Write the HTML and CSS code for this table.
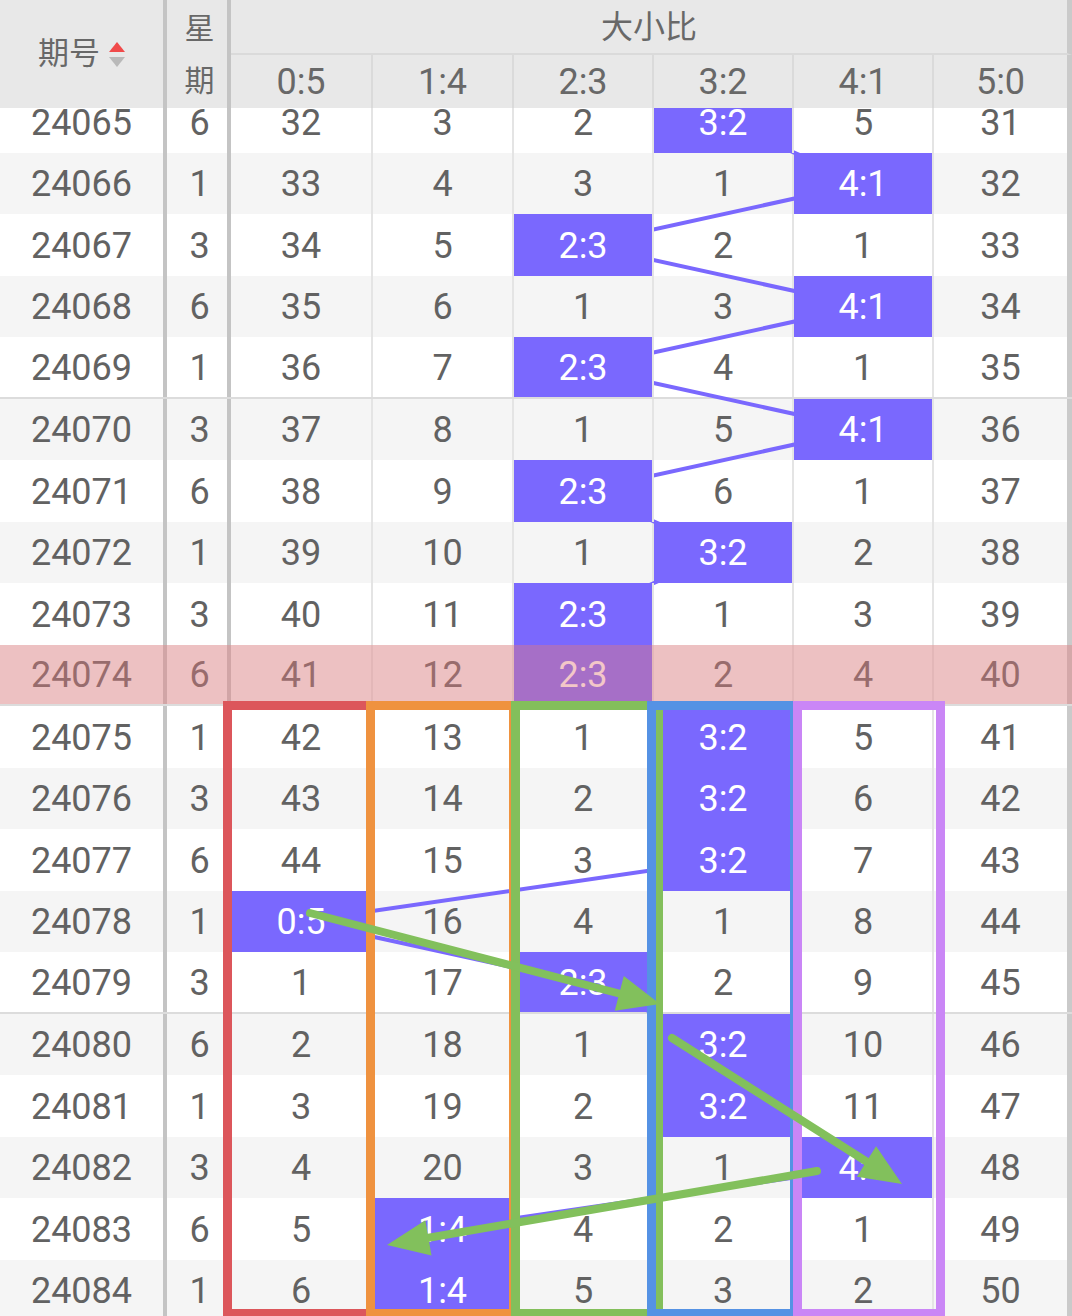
FILE: index.html
```html
<!DOCTYPE html>
<html lang="zh">
<head>
<meta charset="utf-8">
<title>大小比</title>
<link rel="stylesheet" href="styles.css">
</head>
<body>
<div class="table">
  <div class="thead">
    <div class="h h-qh"><span class="qh-text">期号</span><span class="sort"><i class="up"></i><i class="down"></i></span></div>
    <div class="h h-xq"><span>星</span><span>期</span></div>
    <div class="h h-big"><span class="big-text">大小比</span></div>
    <div class="h h-r">0:5</div>
    <div class="h h-r">1:4</div>
    <div class="h h-r">2:3</div>
    <div class="h h-r">3:2</div>
    <div class="h h-r">4:1</div>
    <div class="h h-r last">5:0</div>
  </div>
  <div class="tbody">
    <div class="row"><div class="c qh">24065</div><div class="c xq">6</div><div class="c">32</div><div class="c">3</div><div class="c">2</div><div class="c hit">3:2</div><div class="c">5</div><div class="c last">31</div></div>
    <div class="row even"><div class="c qh">24066</div><div class="c xq">1</div><div class="c">33</div><div class="c">4</div><div class="c">3</div><div class="c">1</div><div class="c hit">4:1</div><div class="c last">32</div></div>
    <div class="row"><div class="c qh">24067</div><div class="c xq">3</div><div class="c">34</div><div class="c">5</div><div class="c hit">2:3</div><div class="c">2</div><div class="c">1</div><div class="c last">33</div></div>
    <div class="row even"><div class="c qh">24068</div><div class="c xq">6</div><div class="c">35</div><div class="c">6</div><div class="c">1</div><div class="c">3</div><div class="c hit">4:1</div><div class="c last">34</div></div>
    <div class="row grp"><div class="c qh">24069</div><div class="c xq">1</div><div class="c">36</div><div class="c">7</div><div class="c hit">2:3</div><div class="c">4</div><div class="c">1</div><div class="c last">35</div></div>
    <div class="row even"><div class="c qh">24070</div><div class="c xq">3</div><div class="c">37</div><div class="c">8</div><div class="c">1</div><div class="c">5</div><div class="c hit">4:1</div><div class="c last">36</div></div>
    <div class="row"><div class="c qh">24071</div><div class="c xq">6</div><div class="c">38</div><div class="c">9</div><div class="c hit">2:3</div><div class="c">6</div><div class="c">1</div><div class="c last">37</div></div>
    <div class="row even"><div class="c qh">24072</div><div class="c xq">1</div><div class="c">39</div><div class="c">10</div><div class="c">1</div><div class="c hit">3:2</div><div class="c">2</div><div class="c last">38</div></div>
    <div class="row"><div class="c qh">24073</div><div class="c xq">3</div><div class="c">40</div><div class="c">11</div><div class="c hit">2:3</div><div class="c">1</div><div class="c">3</div><div class="c last">39</div></div>
    <div class="row even grp cur"><div class="c qh">24074</div><div class="c xq">6</div><div class="c">41</div><div class="c">12</div><div class="c hit">2:3</div><div class="c">2</div><div class="c">4</div><div class="c last">40</div></div>
    <div class="row"><div class="c qh">24075</div><div class="c xq">1</div><div class="c">42</div><div class="c">13</div><div class="c">1</div><div class="c hit">3:2</div><div class="c">5</div><div class="c last">41</div></div>
    <div class="row even"><div class="c qh">24076</div><div class="c xq">3</div><div class="c">43</div><div class="c">14</div><div class="c">2</div><div class="c hit">3:2</div><div class="c">6</div><div class="c last">42</div></div>
    <div class="row"><div class="c qh">24077</div><div class="c xq">6</div><div class="c">44</div><div class="c">15</div><div class="c">3</div><div class="c hit">3:2</div><div class="c">7</div><div class="c last">43</div></div>
    <div class="row even"><div class="c qh">24078</div><div class="c xq">1</div><div class="c hit">0:5</div><div class="c">16</div><div class="c">4</div><div class="c">1</div><div class="c">8</div><div class="c last">44</div></div>
    <div class="row grp"><div class="c qh">24079</div><div class="c xq">3</div><div class="c">1</div><div class="c">17</div><div class="c hit">2:3</div><div class="c">2</div><div class="c">9</div><div class="c last">45</div></div>
    <div class="row even"><div class="c qh">24080</div><div class="c xq">6</div><div class="c">2</div><div class="c">18</div><div class="c">1</div><div class="c hit">3:2</div><div class="c">10</div><div class="c last">46</div></div>
    <div class="row"><div class="c qh">24081</div><div class="c xq">1</div><div class="c">3</div><div class="c">19</div><div class="c">2</div><div class="c hit">3:2</div><div class="c">11</div><div class="c last">47</div></div>
    <div class="row even"><div class="c qh">24082</div><div class="c xq">3</div><div class="c">4</div><div class="c">20</div><div class="c">3</div><div class="c">1</div><div class="c hit">4:1</div><div class="c last">48</div></div>
    <div class="row"><div class="c qh">24083</div><div class="c xq">6</div><div class="c">5</div><div class="c hit">1:4</div><div class="c">4</div><div class="c">2</div><div class="c">1</div><div class="c last">49</div></div>
    <div class="row even"><div class="c qh">24084</div><div class="c xq">1</div><div class="c">6</div><div class="c hit">1:4</div><div class="c">5</div><div class="c">3</div><div class="c">2</div><div class="c last">50</div></div>

    <svg class="trend" width="1072" height="1230" viewBox="0 0 1072 1230">
      <polyline fill="none" stroke="#7a68fe" stroke-width="4" stroke-linejoin="round"
        points="724,30.75 864,92.25 584,153.75 864,215.25 584,276.75 864,338.25 584,399.75 724,461.25 584,522.75 584,584.25 724,645.75 724,707.25 724,768.75 302,830.25 584,891.75 724,953.25 724,1014.75 864,1076.25 443.5,1137.75 443.5,1199.25"/>
    </svg>

    <div class="box box-red"></div>
    <div class="box box-orange"></div>
    <div class="box box-green"></div>
    <div class="box box-blue"></div>
    <div class="box box-purple"></div>

    <svg class="arrows" width="1072" height="1230" viewBox="0 0 1072 1230">
      <g stroke="#82c05c" stroke-width="8" stroke-linecap="round" fill="#82c05c">
        <line x1="310" y1="822" x2="621" y2="903"/>
        <line x1="672" y1="947" x2="868" y2="1071.5"/>
        <line x1="817" y1="1080" x2="427" y2="1147"/>
      </g>
      <g fill="#82c05c">
        <polygon points="660,913 614.8,919.8 623.8,885"/>
        <polygon points="902,1093 856.9,1085.7 876.1,1055.3"/>
        <polygon points="387,1154 425.3,1129.2 431.5,1164.6"/>
      </g>
    </svg>
  </div>
</div>
</body>
</html>
```

FILE: styles.css
```css
html, body {
  margin: 0;
  padding: 0;
  width: 1072px;
  height: 1316px;
  overflow: hidden;
  background: #ffffff;
}

body {
  font-family: Roboto, "Noto Sans CJK SC", sans-serif;
  font-weight: 400;
  color: #626262;
}

.table {
  width: 1072px;
}

.thead {
  position: relative;
  z-index: 10;
  display: grid;
  grid-template-columns: 167px 64px 142px 141px 140px 140px 140px 138px;
  grid-template-rows: 55px 53px;
  background: #e8e8e8;
  color: #686868;
}

.h {
  display: flex;
  align-items: center;
  justify-content: center;
  box-sizing: border-box;
}

.h-qh {
  grid-row: 1 / 3;
  border-right: 4px solid #c4c4c4;
  font-size: 31px;
  gap: 9px;
  font-family: "Noto Sans CJK SC", sans-serif;
}

.qh-text {
  padding-bottom: 7px;
}

.sort {
  display: flex;
  flex-direction: column;
  gap: 5px;
}

.sort i {
  display: block;
  width: 0;
  height: 0;
  border-left: 8px solid transparent;
  border-right: 8px solid transparent;
}

.sort .up {
  border-bottom: 10px solid #f04a4a;
}

.sort .down {
  border-top: 10px solid #b9b9b9;
}

.h-xq {
  grid-row: 1 / 3;
  border-right: 4px solid #c4c4c4;
  flex-direction: column;
  justify-content: flex-start;
  padding-left: 5px;
  font-size: 30px;
  font-family: "Noto Sans CJK SC", sans-serif;
}

.h-xq span {
  height: 52px;
  line-height: 52px;
}

.h-big {
  grid-column: 3 / 9;
  border-bottom: 2px solid #dadada;
  border-right: 5px solid #cacaca;
  font-size: 32px;
  font-family: "Noto Sans CJK SC", sans-serif;
}

.big-text {
  padding-bottom: 5px;
}

.h-r {
  font-size: 36px;
  border-right: 2px solid #dadada;
}

.h-r.last {
  border-right: 5px solid #cacaca;
}

.tbody {
  position: relative;
  margin-top: -17px;
}

.row {
  display: grid;
  grid-template-columns: 167px 64px 142px 141px 140px 140px 140px 138px;
  height: 61.5px;
  box-sizing: border-box;
  background: #ffffff;
}

.row.even {
  background: #f5f5f5;
}

.row.grp {
  border-bottom: 2px solid #dcdcdc;
}

.row.cur {
  position: relative;
}

.row.cur::after {
  content: "";
  position: absolute;
  inset: 0;
  background: rgba(226, 122, 124, 0.42);
  z-index: 3;
}

.c {
  display: flex;
  align-items: center;
  justify-content: center;
  padding-top: 2px;
  font-size: 36px;
  box-sizing: border-box;
  border-right: 2px solid #e4e4e4;
}

.c.qh,
.c.xq {
  border-right: 4px solid #c4c4c4;
}

.c.xq {
  padding-left: 5px;
}

.c.last {
  border-right: 5px solid #cacaca;
}

.c.hit {
  position: relative;
  z-index: 2;
  background: #7a68fe;
  color: #ffffff;
}

.trend {
  position: absolute;
  left: 0;
  top: 0;
  z-index: 1;
}

.box {
  position: absolute;
  top: 610px;
  width: 152px;
  height: 617px;
  box-sizing: border-box;
  border: 9px solid;
  z-index: 4;
}

.box-red { left: 223px; border-color: #dc565b; }
.box-orange { left: 366px; border-color: #ef923f; }
.box-green { left: 511px; border-color: #83bf5b; }
.box-blue { left: 647px; border-color: #5592e4; }
.box-purple { left: 793px; border-color: #ca86f6; }

.arrows {
  position: absolute;
  left: 0;
  top: 0;
  z-index: 5;
}
```
